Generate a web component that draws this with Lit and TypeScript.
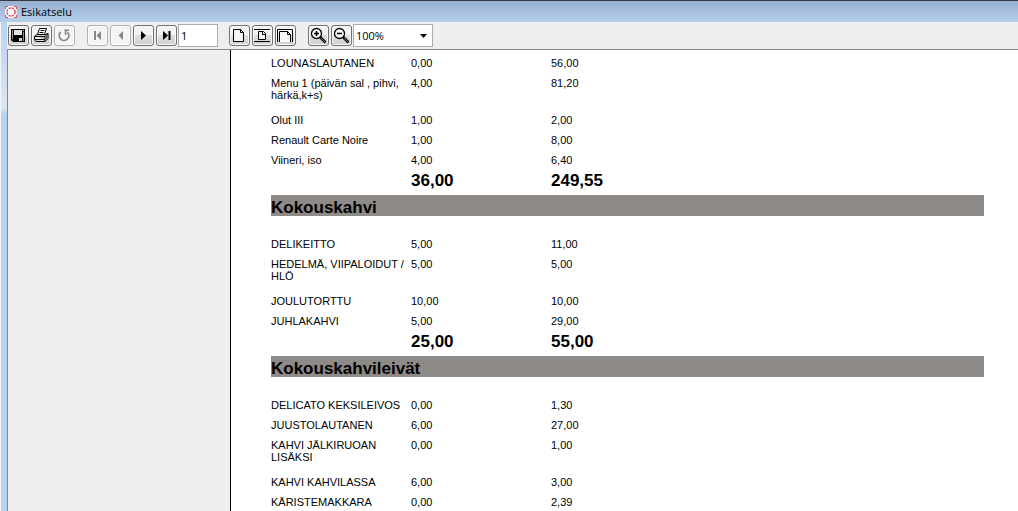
import { LitElement, html, css, svg, nothing } from "lit";
import { customElement, state } from "lit/decorators.js";

interface Item { name: string; count: string; sum: string; }
interface Group { title?: string; items: Item[]; count?: string; sum?: string; }

const item = (name: string, count: string, sum: string): Item => ({ name, count, sum });

const GROUPS: Group[] = [
  {
    items: [
      item("LOUNASLAUTANEN", "0,00", "56,00"),
      item("Menu 1 (päivän sal , pihvi, härkä,k+s)", "4,00", "81,20"),
      item("Olut III", "1,00", "2,00"),
      item("Renault Carte Noire", "1,00", "8,00"),
      item("Viineri, iso", "4,00", "6,40"),
    ],
    count: "36,00",
    sum: "249,55",
  },
  {
    title: "Kokouskahvi",
    items: [
      item("DELIKEITTO", "5,00", "11,00"),
      item("HEDELMÄ, VIIPALOIDUT / HLÖ", "5,00", "5,00"),
      item("JOULUTORTTU", "10,00", "10,00"),
      item("JUHLAKAHVI", "5,00", "29,00"),
    ],
    count: "25,00",
    sum: "55,00",
  },
  {
    title: "Kokouskahvileivät",
    items: [
      item("DELICATO KEKSILEIVOS", "0,00", "1,30"),
      item("JUUSTOLAUTANEN", "6,00", "27,00"),
      item("KAHVI JÄLKIRUOAN LISÄKSI", "0,00", "1,00"),
      item("KAHVI KAHVILASSA", "6,00", "3,00"),
      item("KÄRISTEMAKKARA", "0,00", "2,39"),
    ],
  },
];

const lens = svg`
  <path d="M9.5 9.5l6 6" stroke="#000" stroke-width="2.6"/>
  <path d="M10.5 10.5l4.5 4.5" stroke="#999" stroke-width=".8"/>
  <circle cx="6.5" cy="6.5" r="5" fill="#fff" stroke="#000" stroke-width="1.3"/>`;

const ICONS = {
  save: svg`<path d="M1 2h14v13H3l-2-2z"/><path d="M2 3h1v9H2zM13 5h1v9h-1z" fill="#8a8a8a"/><path d="M4 3h8v5H4z" fill="#e4e4e4"/><path d="M13 3h1v1h-1z" fill="#ddd"/><path d="M9 11h3v3H9z" fill="#d6d6d6"/>`,
  print: svg`<path d="M4.500 7.500l2-6h7l-2 6z" fill="#fff" stroke="#000"/><path d="M7.500 3.500h4M6.500 5.500h4" stroke="#000"/><path d="M1.500 9.500l2.500-2h8.500l2.500-1v5l-3 3h-9l-1.500-2z" fill="#d4d4d4" stroke="#000"/><path d="M1.500 9.500h10.500l3-3M12 9.500v5M2 12.500h10" stroke="#000" fill="none"/><path d="M3 11h5" stroke="#fff"/><path d="M8 11h3" stroke="#d6c62a"/><path d="M13.500 9v4" stroke="#666"/>`,
  reload: svg`<path d="M4.800 5a4.800 4.800 0 1 0 6.800.3" fill="none" stroke="#858585" stroke-width="1.800"/><path d="M8 2.500h5v1.600h-2.600v3.900H8.800V4z" fill="#858585"/>`,
  first: svg`<path d="M5 4h2v9H5zM12 4v9L7.500 8.500z" fill="#858585"/>`,
  prev: svg`<path d="M11 4v9L6.500 8.500z" fill="#858585"/>`,
  next: svg`<path d="M6 4v9l5-4.500z"/>`,
  last: svg`<path d="M5 4v9l5-4.500zM10.500 4h2v9h-2z"/>`,
  page: svg`<path d="M2.500 2.500h7l3 3v9h-10z" fill="#f6f6f6" stroke="#000"/><path d="M9.500 2.500v3h3" fill="none" stroke="#000"/>`,
  fitPage: svg`<path d="M0 2.500h16M0 14.500h16" stroke="#000"/><path d="M4.500 4.500h5l2 2v6h-7z" fill="#f6f6f6" stroke="#000"/><path d="M8.500 4.500v3h3" fill="none" stroke="#000"/>`,
  fitWidth: svg`<path d="M.5 15V2.500h15V15" fill="none" stroke="#000"/><path d="M2.500 15V4.500h8l3 3V15" fill="#f6f6f6" stroke="#000"/><path d="M10.500 4.500v3h3" fill="none" stroke="#000"/>`,
  zoomIn: svg`${lens}<path d="M4 6.500h5M6.500 4v5" stroke="#000" stroke-width="1.600"/>`,
  zoomOut: svg`${lens}<path d="M4 6.500h5" stroke="#000" stroke-width="1.600"/>`,
};

type IconName = keyof typeof ICONS;

@customElement("app-root")
export class AppRoot extends LitElement {
  @state() private page = "1";

  static styles = css`
    :host {
      display: flex;
      flex-direction: column;
      box-sizing: border-box;
      height: 100vh;
      overflow: hidden;
      background: #efefef;
      color: #000;
      font-family: "Open Sans", "Noto Sans", sans-serif;
    }
    .title-bar {
      display: flex;
      align-items: center;
      gap: 4px;
      box-sizing: border-box;
      height: 22px;
      flex: none;
      padding: 0 5px;
      border-top: 1px solid #38393c;
      background: linear-gradient(#96b1d1, #b7cfe9);
    }
    .title-bar svg { width: 12px; height: 12px; }
    h1 {
      margin: 0;
      font-size: 11px;
      line-height: 16px;
      font-weight: 400;
    }
    .frame {
      display: flex;
      flex: 1;
      min-height: 0;
    }
    .edge {
      flex: none;
      width: 7px;
      border-left: 1px solid #f2f6fb;
      box-sizing: border-box;
      background: linear-gradient(#bcd3ec 0, #d9e6f5 86px, #b9d1ea 92px);
    }
    .window {
      display: flex;
      flex-direction: column;
      flex: 1;
      min-width: 0;
    }
    .toolbar {
      display: flex;
      align-items: center;
      gap: 12px;
      height: 27px;
      flex: none;
      padding-left: 1px;
    }
    .tools { display: flex; align-items: center; gap: 2px; }
    button {
      box-sizing: border-box;
      width: 21px;
      height: 21px;
      padding: 1px;
      border: 1px solid #707070;
      border-radius: 3px;
      background: linear-gradient(#f3f3f3 50%, #dedede 50%, #d0d0d0);
      box-shadow: inset 0 0 0 1px #fafafa;
    }
    button:disabled { border-color: #adb2b5; background: #f4f4f4; }
    button svg { display: block; width: 17px; height: 17px; }
    input, select {
      box-sizing: border-box;
      height: 23px;
      margin: 0 -1px;
      border: 1px solid #abadb3;
      border-radius: 0;
      background: #fff;
      color: #000;
      font: 11px/16px "Open Sans", "Noto Sans", sans-serif;
      outline: none;
    }
    input { width: 40px; padding: 0 2px; }
    .zoom { display: grid; align-items: center; }
    .zoom select, .zoom svg { grid-area: 1 / 1; }
    .zoom select { width: 80px; padding: 0 2px; appearance: none; }
    .zoom svg { justify-self: end; width: 7px; height: 4px; margin-right: 5px; pointer-events: none; }
    .preview {
      display: flex;
      flex: 1;
      min-height: 0;
      border-top: 1px solid #828790;
      border-left: 1px solid #828790;
    }
    .outline {
      flex: none;
      width: 222px;
      border-right: 1px solid #000;
    }
    .sheet {
      flex: 1;
      overflow: hidden;
      padding: 3px 34px 0 40px;
      background: #fff;
      font-family: "Liberation Sans", Arial, sans-serif;
    }
    h2 {
      margin: 3px 0 18px;
      height: 21px;
      background: #8e8a88;
      font-size: 17px;
      line-height: 25px;
      font-weight: 700;
    }
    table { border-collapse: collapse; table-layout: fixed; width: 420px; }
    th, td {
      padding: 4px 0;
      font-size: 11px;
      line-height: 12px;
      font-weight: 400;
      text-align: left;
      vertical-align: top;
    }
    .name { width: 140px; box-sizing: border-box; }
    .wrapped > * { padding-bottom: 9px; }
    .total > * {
      padding: 0;
      font-size: 17px;
      line-height: 22px;
      font-weight: 700;
    }
  `;

  private icon(name: IconName) {
    return html`<svg viewBox="0 0 17 17" aria-hidden="true">${ICONS[name]}</svg>`;
  }

  private tool(name: IconName, label: string, disabled = false) {
    return html`<button type="button" aria-label=${label} ?disabled=${disabled}>${this.icon(name)}</button>`;
  }

  private group(g: Group) {
    return html`<section>
      ${g.title ? html`<h2>${g.title}</h2>` : nothing}
      <table>
        <tbody>
          ${g.items.map((i) => html`<tr class=${i.name.length > 22 ? "wrapped" : ""}>
            <th class="name" scope="row">${i.name}</th><td>${i.count}</td><td>${i.sum}</td>
          </tr>`)}
        </tbody>
        ${g.sum ? html`<tfoot><tr class="total"><td></td><td>${g.count}</td><td>${g.sum}</td></tr></tfoot>` : nothing}
      </table>
    </section>`;
  }

  render() {
    return html`
      <header class="title-bar">
        <svg viewBox="0 0 12 12" aria-hidden="true">
          <rect width="12" height="12" rx="1" fill="#fbeef0"/>
          <circle cx="6" cy="6" r="4" fill="#fff" stroke="#d8505c" stroke-width="1.500" stroke-dasharray="2.200 1"/>
          <path d="M.5 3V.5H3M9 .5h2.500V3M11.500 9v2.500H9M3 11.500H.5V9" fill="none" stroke="#d8505c"/>
        </svg>
        <h1>Esikatselu</h1>
      </header>
      <div class="frame">
        <div class="edge"></div>
        <div class="window">
          <div class="toolbar" role="toolbar">
            <div class="tools">
              ${this.tool("save", "Tallenna")}
              ${this.tool("print", "Tulosta")}
              ${this.tool("reload", "Päivitä", true)}
            </div>
            <div class="tools">
              ${this.tool("first", "Ensimmäinen sivu", true)}
              ${this.tool("prev", "Edellinen sivu", true)}
              ${this.tool("next", "Seuraava sivu")}
              ${this.tool("last", "Viimeinen sivu")}
              <input aria-label="Sivu" .value=${this.page}
                @input=${(e: Event) => (this.page = (e.target as HTMLInputElement).value)}>
            </div>
            <div class="tools">
              ${this.tool("page", "Todellinen koko")}
              ${this.tool("fitPage", "Sovita sivu")}
              ${this.tool("fitWidth", "Sovita leveys")}
            </div>
            <div class="tools">
              ${this.tool("zoomIn", "Lähennä")}
              ${this.tool("zoomOut", "Loitonna")}
              <div class="zoom">
                <select aria-label="Zoomaus"><option>100%</option></select>
                <svg viewBox="0 0 7 4" aria-hidden="true"><path d="M0 0h7L3.500 4z"/></svg>
              </div>
            </div>
          </div>
          <div class="preview">
            <nav class="outline" aria-label="Sisällys"></nav>
            <main class="sheet">${GROUPS.map((g) => this.group(g))}</main>
          </div>
        </div>
      </div>
    `;
  }
}
